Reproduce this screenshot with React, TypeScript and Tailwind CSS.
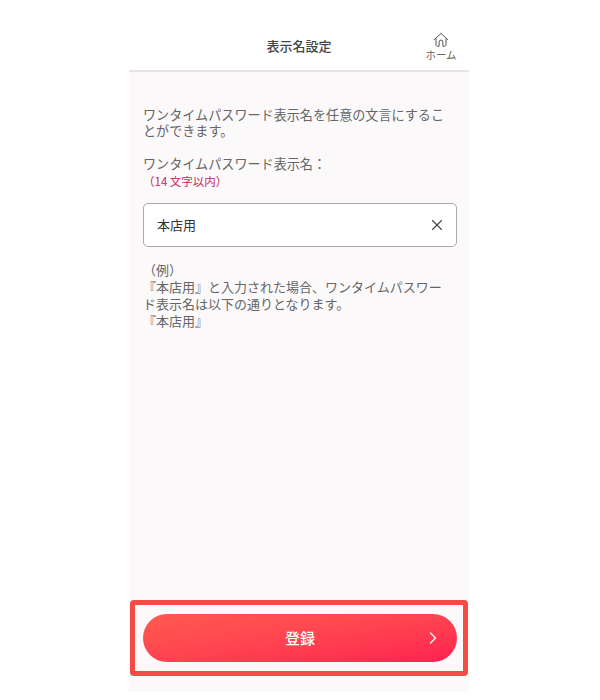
import { ChevronRight, X } from "lucide-react";

const jpFont = "font-['Noto_Sans_CJK_JP','Noto_Sans',sans-serif]";

function HomeIcon() {
  return (
    <svg viewBox="0 0 16 16" fill="none" stroke="#555" strokeWidth="1" strokeLinejoin="round" className="h-4 w-4">
      <path d="M1.2 7.6 8 1.4l6.8 6.2" strokeLinecap="round" />
      <path d="M3 6.4v6.4c0 .9.6 1.5 1.5 1.5h1.6V10a1.9 1.9 0 0 1 3.8 0v4.3h1.6c.9 0 1.5-.6 1.5-1.5V6.4" />
    </svg>
  );
}

export default function App() {
  return (
    <div className={`flex h-[700px] w-[600px] justify-center bg-white pr-[2px] pt-3 ${jpFont}`}>
      <div className="flex h-[680px] w-[340px] flex-col bg-[#fbf9fa]">
        <header className="relative flex h-[60px] shrink-0 items-center justify-center border-b-2 border-[#e6e4e5] bg-white pt-[10px]">
          <h1 className="text-[13px] font-medium text-[#444]">表示名設定</h1>
          <div className="absolute right-[12px] top-[20px] flex w-[32px] flex-col items-center">
            <HomeIcon />
            <span className="mt-[1px] text-[10.5px] leading-[12px] text-[#666]">ホーム</span>
          </div>
        </header>

        <main className="flex-1 pl-[14px] pr-[12px] pt-[35px]">
          <p className="w-[310px] text-[13.1px] leading-[16px] text-[#666]">
            ワンタイムパスワード表示名を任意の文言にすることができます。
          </p>
          <p className="mt-[16px] text-[13.1px] leading-[17px] text-[#666]">ワンタイムパスワード表示名：</p>
          <p className="mt-[1px] text-[11.5px] leading-[16px] text-[#c8285f]">（14 文字以内）</p>

          <div className="mt-[14px] flex h-[44px] items-center justify-between rounded-[5px] border border-[#aaa8a9] bg-white pl-[13px] pr-[10px]">
            <span className="text-[13px] text-[#333]">本店用</span>
            <X className="h-[18px] w-[18px] text-[#444]" strokeWidth={1.5} />
          </div>

          <div className="mt-[14px] w-[304px] text-[13px] leading-[17px] text-[#666]">
            <p>（例）</p>
            <p>『本店用』と入力された場合、ワンタイムパスワード表示名は以下の通りとなります。</p>
            <p>『本店用』</p>
          </div>
        </main>

        <footer className="mx-[1px] mb-[16px] rounded-[4px] border-[5px] border-[#f44c45] pb-[9px] pl-[8px] pr-[6px] pt-[9px]">
          <button className="relative flex h-[48px] w-full items-center justify-center rounded-full bg-gradient-to-br from-[#ff5a50] to-[#ff1f50] text-white">
            <span className="text-[15px] font-medium">登録</span>
            <ChevronRight className="absolute right-[14px] h-[20px] w-[20px]" strokeWidth={1.5} />
          </button>
        </footer>
      </div>
    </div>
  );
}
